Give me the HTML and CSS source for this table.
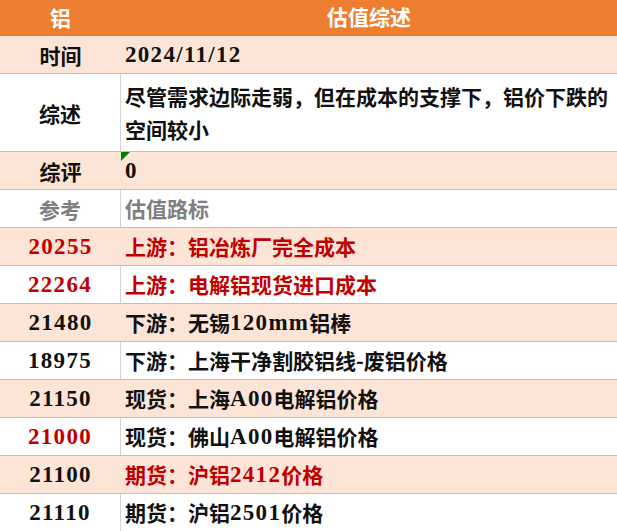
FILE: index.html
```html
<!DOCTYPE html>
<html lang="zh">
<head>
<meta charset="utf-8">
<link rel="stylesheet" href="styles.css">
</head>
<body>
<div class="table">
  <div class="row head">
    <div class="key">铝</div>
    <div class="val center">估值综述</div>
  </div>
  <div class="row peach">
    <div class="key">时间</div>
    <div class="val"><span class="lat">2024/11/12</span></div>
  </div>
  <div class="row white tall">
    <div class="key">综述</div>
    <div class="val">尽管需求边际走弱，但在成本的支撑下，铝价下跌的空间较小</div>
  </div>
  <div class="row peach">
    <div class="key">综评</div>
    <div class="val note"><span class="lat">0</span><span class="flag"></span></div>
  </div>
  <div class="row white grey">
    <div class="key">参考</div>
    <div class="val">估值路标</div>
  </div>
  <div class="row peach red">
    <div class="key"><span class="lat">20255</span></div>
    <div class="val">上游：铝冶炼厂完全成本</div>
  </div>
  <div class="row white red">
    <div class="key"><span class="lat">22264</span></div>
    <div class="val">上游：电解铝现货进口成本</div>
  </div>
  <div class="row peach">
    <div class="key"><span class="lat">21480</span></div>
    <div class="val">下游：无锡<span class="lat">120mm</span>铝棒</div>
  </div>
  <div class="row white">
    <div class="key"><span class="lat">18975</span></div>
    <div class="val">下游：上海干净割胶铝线-废铝价格</div>
  </div>
  <div class="row peach">
    <div class="key"><span class="lat">21150</span></div>
    <div class="val">现货：上海<span class="lat">A00</span>电解铝价格</div>
  </div>
  <div class="row white">
    <div class="key redtext"><span class="lat">21000</span></div>
    <div class="val">现货：佛山<span class="lat">A00</span>电解铝价格</div>
  </div>
  <div class="row peach">
    <div class="key"><span class="lat">21100</span></div>
    <div class="val redtext">期货：沪铝<span class="lat">2412</span>价格</div>
  </div>
  <div class="row white">
    <div class="key"><span class="lat">21110</span></div>
    <div class="val">期货：沪铝<span class="lat">2501</span>价格</div>
  </div>
</div>
</body>
</html>
```
FILE: styles.css
```css
html, body {
  margin: 0;
  padding: 0;
  background: #ffffff;
}
body {
  font-family: "Noto Sans CJK SC", "Liberation Serif", sans-serif;
  font-weight: 700;
  font-size: 21px;
  color: #111111;
}
.table {
  width: 617px;
  display: flex;
  flex-direction: column;
}
.row {
  display: grid;
  grid-template-columns: 121px 1fr;
  height: 38px;
  box-sizing: border-box;
  border-bottom: 1px solid #f4b084;
}
.row.head {
  height: 36px;
  background: #ed7d31;
  color: #ffffff;
  border-bottom: none;
}
.row.tall {
  height: 78px;
}
.row.peach {
  background: #fce4d6;
}
.row.white {
  background: #ffffff;
}
.row.white .key {
  border-right: 1px solid #d4d4d4;
}
.key {
  display: flex;
  align-items: center;
  justify-content: center;
  box-sizing: border-box;
}
.val {
  display: flex;
  align-items: center;
  padding-left: 4px;
  padding-right: 4px;
  line-height: 33px;
}
.val.center {
  justify-content: center;
  padding-left: 0;
  padding-right: 0;
}
.head .key, .head .val {
  padding-bottom: 4px;
}
.lat {
  font-family: "Liberation Serif", serif;
  font-size: 23px;
  letter-spacing: 1.3px;
}
.grey {
  color: #7f7f7f;
}
.red, .redtext {
  color: #c00000;
}
.note {
  position: relative;
}
.flag {
  position: absolute;
  left: 0;
  top: 0;
  width: 0;
  height: 0;
  border-top: 9px solid #008000;
  border-right: 9px solid transparent;
}
```
